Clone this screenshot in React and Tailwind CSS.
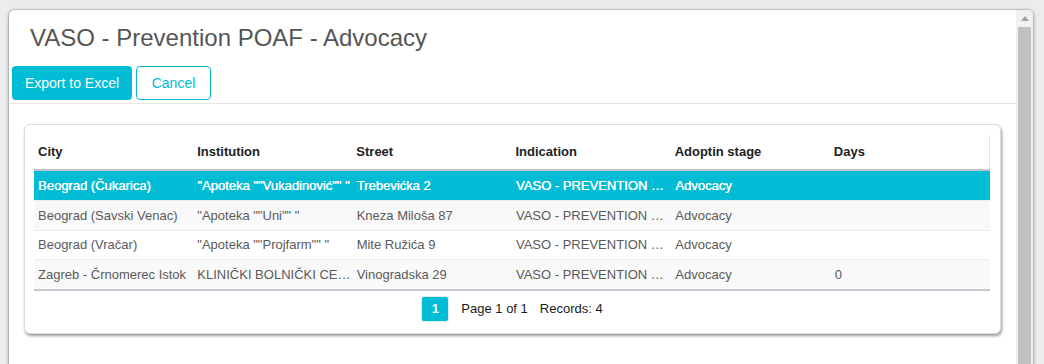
import React from "react";

const rows = [
  {
    city: "Beograd (Čukarica)",
    institution: '"Apoteka ""Vukadinović"" "',
    street: "Trebevićka 2",
    indication: "VASO - PREVENTION POAF",
    stage: "Advocacy",
    days: "",
    h: "h-[30px]",
  },
  {
    city: "Beograd (Savski Venac)",
    institution: '"Apoteka ""Uni"" "',
    street: "Kneza Miloša 87",
    indication: "VASO - PREVENTION POAF",
    stage: "Advocacy",
    days: "",
    h: "h-[30px]",
  },
  {
    city: "Beograd (Vračar)",
    institution: '"Apoteka ""Projfarm"" "',
    street: "Mite Ružića 9",
    indication: "VASO - PREVENTION POAF",
    stage: "Advocacy",
    days: "",
    h: "h-[29px]",
  },
  {
    city: "Zagreb - Črnomerec Istok",
    institution: "KLINIČKI BOLNIČKI CENTAR SESTRE MILOSRDNICE",
    street: "Vinogradska 29",
    indication: "VASO - PREVENTION POAF",
    stage: "Advocacy",
    days: "0",
    h: "h-[31px]",
  },
];

const headers = ["City", "Institution", "Street", "Indication", "Adoptin stage", "Days"];

const Scrollbar = () => (
  <div className="w-[17px] bg-[#f1f1f1] flex flex-col">
    <div className="h-[17px] flex items-center justify-center">
      <svg width="8" height="5" viewBox="0 0 8 5">
        <path d="M0 5 L4 0 L8 5 Z" fill="#a3a3a3" />
      </svg>
    </div>
    <div className="flex-1 mx-[2px] bg-[#c1c1c1]" />
  </div>
);

const DataTable = () => (
  <div className="text-[13px]">
    <div className="grid grid-cols-6 h-[36px] items-center border-b-2 border-[#c4c4c4] border-r border-r-[#e6e6e6] font-bold text-[#222]">
      {headers.map((h) => (
        <div key={h} className="pl-[4px] truncate">
          {h}
        </div>
      ))}
    </div>
    {rows.map((r, i) => {
      const selected = i === 0;
      const last = i === rows.length - 1;
      const rowCls = selected
        ? "bg-[#00bcd4] text-white [text-shadow:0.35px_0_0_#fff]"
        : i % 2 === 1
        ? "bg-[#f9f9f9] text-[#5a5a5a]"
        : "bg-white text-[#5a5a5a]";
      const borderCls = last ? "border-b-2 border-[#c5ccd3]" : "border-b border-[#ececec]";
      return (
        <div key={r.city} className={`grid grid-cols-6 items-center ${r.h} ${rowCls} ${borderCls}`}>
          {[r.city, r.institution, r.street, r.indication, r.stage, r.days].map((v, j) => (
            <div key={j} className="pl-[4px] pr-[2px] truncate whitespace-pre">
              {v}
            </div>
          ))}
        </div>
      );
    })}
  </div>
);

export default function App() {
  return (
    <div className="w-[1044px] h-[364px] overflow-hidden bg-[#ececec] pl-[9px] pr-[11px] pt-[10px] font-['Liberation_Sans',Arial,sans-serif]">
      <div className="flex h-[380px] rounded-t-[5px] bg-white overflow-hidden shadow-[0_0_0_1px_rgba(0,0,0,0.1),0_1px_4px_rgba(0,0,0,0.35)]">
        <div className="flex-1 min-w-0">
          <div className="pt-[14px] pl-[21px] text-[24px] leading-[28px] text-[#555]">
            VASO - Prevention POAF - Advocacy
          </div>
          <div className="mt-[14px] pl-[3px] pb-[3px] flex gap-[4px] border-b border-[#e5e5e5]">
            <button className="w-[120px] h-[34px] rounded-[4px] bg-[#00bcd4] text-white text-[14px]">
              Export to Excel
            </button>
            <button className="w-[75px] h-[34px] rounded-[4px] border border-[#00bcd4] bg-white text-[#00bcd4] text-[14px]">
              Cancel
            </button>
          </div>
          <div className="mt-[20px] mx-[15px] rounded-[6px] border border-[#dcdcdc] bg-white shadow-[1px_2px_3px_rgba(0,0,0,0.4)] pl-[9px] pr-[10px] pt-[10px] pb-[11px]">
            <DataTable />
            <div className="mt-[5px] flex justify-center items-center gap-[12px] text-[13px] text-[#1a1a1a]">
              <div className="w-[28px] h-[26px] rounded-[3px] bg-[#00bcd4] border border-[#d8eef2] text-white font-bold flex items-center justify-center">
                1
              </div>
              <span>Page 1 of 1</span>
              <span>Records: 4</span>
            </div>
          </div>
        </div>
        <Scrollbar />
      </div>
    </div>
  );
}
